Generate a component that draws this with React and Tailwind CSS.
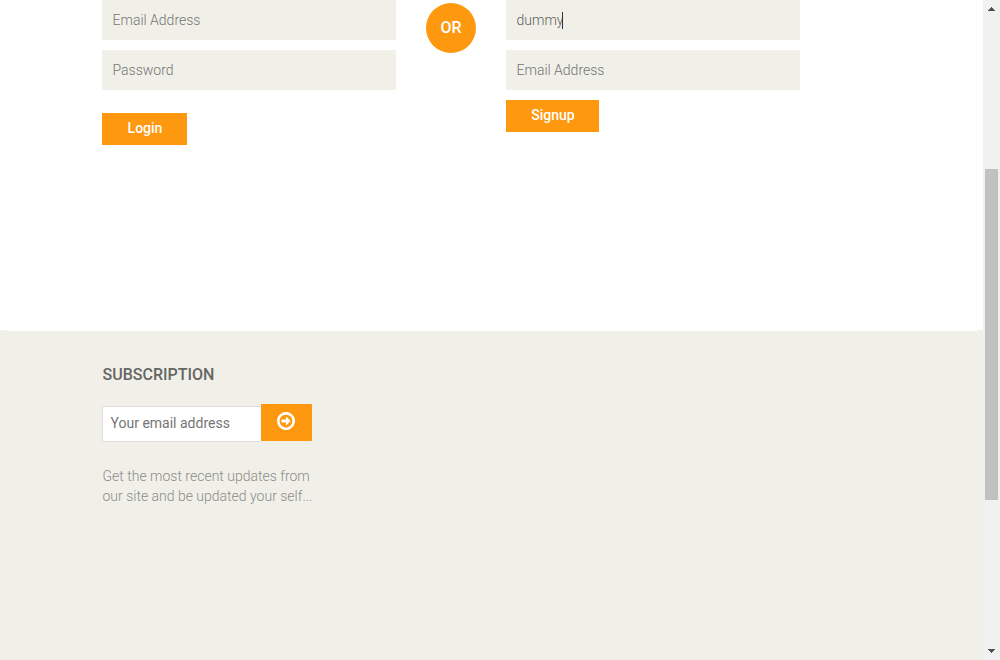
function ArrowCircle() {
  return (
    <svg className="block h-[18px] w-[18px]" viewBox="0 128 1536 1536" fill="currentColor" aria-hidden="true">
      <path d="M1152 896q0 14-9 23l-320 320q-9 9-23 9-13 0-22.500-9.500t-9.500-22.500v-192h-352q-13 0-22.500-9.500t-9.500-22.500v-192q0-13 9.500-22.500t22.500-9.500h352v-192q0-14 9-23t23-9q12 0 24 10l319 319q9 9 9 23zm160 0q0-148-73-273t-198-198-273-73-273 73-198 198-73 273 73 273 198 198 273 73 273-73 198-198 73-273zm224 0q0 209-103 385.500t-279.500 279.500-385.500 103-385.500-103-279.500-279.500-103-385.500 103-385.500 279.500-279.500 385.500-103 385.500 103 279.500 279.500 103 385.500z" />
    </svg>
  );
}

function Field({ children, filled }) {
  return (
    <div
      className={
        filled
          ? "flex h-10 w-[294px] items-center bg-[#f0f0e9] pl-[10.5px] text-sm font-light text-[#5f5f5a]"
          : "flex h-10 w-[294px] items-center bg-[#f0f0e9] pl-[10.5px] text-sm font-light text-[#757575]"
      }
    >
      {children}
    </div>
  );
}

function Scrollbar() {
  return (
    <div className="flex w-[17px] shrink-0 flex-col items-center bg-[#f1f1f1]">
      <div className="flex h-[169px] w-full justify-center pt-[7px]">
        <svg className="h-1 w-[7px]" viewBox="0 0 7 4" shapeRendering="crispEdges" fill="#505050">
          <path d="M3 0h1v1h1v1h1v1h1v1H0V3h1V2h1V1h1z" />
        </svg>
      </div>
      <div className="h-[331px] w-[13px] bg-[#c1c1c1]" />
      <div className="flex w-full grow items-end justify-center pb-[7px]">
        <svg className="h-1 w-[7px]" viewBox="0 0 7 4" shapeRendering="crispEdges" fill="#505050">
          <path d="M0 0h7v1H6v1H5v1H4v1H3V3H2V2H1V1H0z" />
        </svg>
      </div>
    </div>
  );
}

export default function App() {
  return (
    <div className="flex h-[660px] w-[1000px] overflow-hidden bg-white font-['Roboto',sans-serif]">
      <div className="flex w-[983px] flex-col">
        <main className="flex h-[330px] items-start pl-[102px]">
          <form className="flex flex-col items-start">
            <Field>Email Address</Field>
            <div className="h-2.5" />
            <Field>Password</Field>
            <button type="button" className="mt-[23px] h-8 w-[85px] bg-[#fe980f] pb-0.5 pl-px text-sm font-medium text-white">
              Login
            </button>
          </form>
          <div className="mx-[30px] mt-[3px] flex h-[50px] w-[50px] items-center justify-center rounded-full bg-[#fe980f] text-base font-medium text-white">
            OR
          </div>
          <form className="flex flex-col items-start gap-2.5">
            <Field filled>
              dummy
              <span className="-ml-[1.5px] h-[17px] w-px bg-[#333]" />
            </Field>
            <Field>Email Address</Field>
            <button type="button" className="h-8 w-[93px] bg-[#fe980f] pb-0.5 pl-px text-sm font-medium text-white">
              Signup
            </button>
          </form>
        </main>
        <footer className="h-[330px] bg-[#f0f0e9]">
          <div className="mx-[7px] h-px w-[970px] bg-white" />
          <div className="pl-[102px]">
            <h2 className="pt-[34px] pl-[0.5px] text-base leading-5 font-medium text-[#666663]">SUBSCRIPTION</h2>
            <div className="mt-[19px] flex">
              <div className="mt-0.5 flex h-9 w-[159px] items-center border border-r-0 border-[#ddd] bg-white pb-0.5 pl-[7.5px] text-sm text-[#757575]">
                Your email address
              </div>
              <button type="button" aria-label="Subscribe" className="flex h-[37px] w-[51px] justify-center bg-[#fe980f] pt-2 pr-px text-white">
                <ArrowCircle />
              </button>
            </div>
            <p className="mt-6 pl-[0.5px] text-sm leading-5 font-light text-[#8c8c88]">
              Get the most recent updates from
              <br />
              our site and be updated your self...
            </p>
          </div>
        </footer>
      </div>
      <Scrollbar />
    </div>
  );
}
